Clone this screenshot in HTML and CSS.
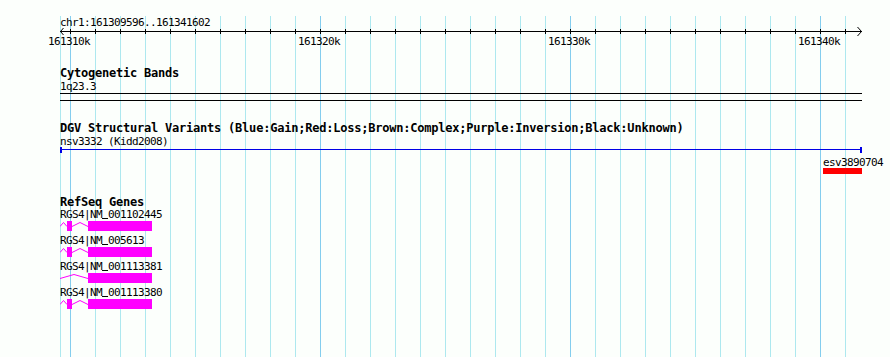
FILE: index.html
```html
<!DOCTYPE html>
<html lang="en">
<head>
  <meta charset="UTF-8">
  <title>chr1:161309596..161341602</title>
  <link rel="stylesheet" href="styles.css">
</head>
<body>
  <div class="panel">
    <div class="grid"></div>

    <section class="ruler">
      <div class="ruler-title">chr1:161309596..161341602</div>
      <svg class="axis" width="803" height="9" viewBox="0 0 803 9">
        <defs>
          <pattern id="ticks" x="10" y="0" width="25" height="9" patternUnits="userSpaceOnUse">
            <rect x="0" y="2" width="1" height="5" fill="#000"/>
          </pattern>
        </defs>
        <rect x="10" y="0" width="776" height="9" fill="url(#ticks)"/>
        <rect x="0" y="4" width="802" height="1" fill="#000"/>
        <polyline points="3.5,1 0.5,4.5 3.5,8" fill="none" stroke="#000"/>
        <polyline points="797.5,0 801.5,4.5 797.5,9" fill="none" stroke="#000"/>
      </svg>
      <div class="tick-labels">
        <span>161310k</span>
        <span>161320k</span>
        <span>161330k</span>
        <span>161340k</span>
      </div>
    </section>

    <section class="track cyto">
      <div class="track-title">Cytogenetic Bands</div>
      <div class="feature-label">1q23.3</div>
      <div class="band"></div>
    </section>

    <section class="track dgv">
      <div class="track-title">DGV Structural Variants (Blue:Gain;Red:Loss;Brown:Complex;Purple:Inversion;Black:Unknown)</div>
      <div class="feature-label">nsv3332 (Kidd2008)</div>
      <div class="variant gain"></div>
      <div class="subfeature" style="margin-left: 763px;">
        <div class="feature-label">esv3890704</div>
        <div class="variant loss" style="width: 39px;"></div>
      </div>
    </section>

    <section class="track refseq">
      <div class="track-title">RefSeq Genes</div>

      <div class="gene">
        <div class="feature-label">RGS4|NM<span class="us">_</span>001102445</div>
        <svg class="gene-model" width="92" height="10" viewBox="0 0 92 10">
          <polyline points="0,5.5 3.5,1.5 7,5.5" fill="none" stroke="#f0f"/>
          <rect x="7" y="0" width="5" height="10" fill="#f0f"/>
          <polyline points="12,5.5 20,1.5 28,5.5" fill="none" stroke="#f0f"/>
          <rect x="28" y="0" width="64" height="10" fill="#f0f"/>
        </svg>
      </div>

      <div class="gene">
        <div class="feature-label">RGS4|NM<span class="us">_</span>005613</div>
        <svg class="gene-model" width="92" height="10" viewBox="0 0 92 10">
          <polyline points="0,5.5 3.5,1.5 7,5.5" fill="none" stroke="#f0f"/>
          <rect x="7" y="0" width="5" height="10" fill="#f0f"/>
          <polyline points="12,5.5 20,1.5 28,5.5" fill="none" stroke="#f0f"/>
          <rect x="28" y="0" width="64" height="10" fill="#f0f"/>
        </svg>
      </div>

      <div class="gene">
        <div class="feature-label">RGS4|NM<span class="us">_</span>001113381</div>
        <svg class="gene-model" width="92" height="10" viewBox="0 0 92 10">
          <polyline points="0,5.5 14,1.5 28,5.5" fill="none" stroke="#f0f"/>
          <rect x="28" y="0" width="64" height="10" fill="#f0f"/>
        </svg>
      </div>

      <div class="gene">
        <div class="feature-label">RGS4|NM<span class="us">_</span>001113380</div>
        <svg class="gene-model" width="92" height="10" viewBox="0 0 92 10">
          <polyline points="0,5.5 3.5,1.5 7,5.5" fill="none" stroke="#f0f"/>
          <rect x="7" y="0" width="5" height="10" fill="#f0f"/>
          <polyline points="12,5.5 20,1.5 28,5.5" fill="none" stroke="#f0f"/>
          <rect x="28" y="0" width="64" height="10" fill="#f0f"/>
        </svg>
      </div>
    </section>
  </div>
</body>
</html>
```

FILE: styles.css
```css
body {
  margin: 0;
  padding: 0;
  background-color: #fcfffc;
  color: #000;
  font-family: 'DejaVu Sans Mono', 'Liberation Mono', monospace;
  font-size: 11px;
  letter-spacing: -0.62px; /* 6px per character, like the gd small font */
  line-height: 13px;
  overflow: hidden;
}

.panel {
  position: relative;
  z-index: 0;
  width: 890px;
  height: 357px;
  padding-left: 60px;
  box-sizing: border-box;
}

/* vertical guide lines, one every 25px, darker every 250px */
.grid {
  position: absolute;
  z-index: -1;
  top: 0;
  bottom: 0;
  left: 70px;
  width: 776px;
  background-image:
    linear-gradient(to right, #84cdee 1px, transparent 1px),
    linear-gradient(to right, #ade8ef 1px, transparent 1px);
  background-size: 250px 100%, 25px 100%;
}

.grid::before {
  content: "";
  position: absolute;
  top: 0;
  bottom: 0;
  left: -10px;
  width: 1px;
  background-color: #ade8ef;
}

/* ruler */
.ruler-title {
  margin-top: 16px;
}

.axis {
  display: block;
  margin-top: -2px;
}

.tick-labels {
  display: flex;
  margin-top: -1px;
  margin-left: -12px;
}

.tick-labels span {
  flex: 0 0 250px;
}

.tick-labels span:last-child {
  flex: none;
}

/* tracks */
.track-title {
  font-weight: bold;
  font-size: 12px;
  letter-spacing: -0.22px;
}

.feature-label {
  white-space: nowrap;
}

.cyto {
  margin-top: 19px;
}

.band {
  width: 802px;
  height: 8px;
  box-sizing: border-box;
  border-top: 1px solid #000;
  border-bottom: 1px solid #000;
}

.dgv {
  margin-top: 21px;
}

.variant {
  height: 6px;
  box-sizing: border-box;
}

.variant.gain {
  width: 802px;
  margin-top: -1px;
  border-left: 2px solid #0000e6;
  border-right: 2px solid #0000e6;
  background: linear-gradient(to bottom, transparent 2px, #0000e6 2px, #0000e6 3px, transparent 3px);
}

.subfeature {
  margin-top: 3px;
}

.variant.loss {
  margin-top: -1px;
  background-color: #ff0000;
}

.refseq {
  margin-top: 22px;
}

.gene {
  margin-bottom: 4px;
}

.gene .feature-label {
  line-height: 12px;
}

/* the font's own underscore is too thin at this size */
.us {
  color: transparent;
  text-decoration: underline;
  text-decoration-color: #000;
  text-decoration-thickness: 1px;
  text-underline-offset: 0;
}

.gene-model {
  display: block;
}
```
